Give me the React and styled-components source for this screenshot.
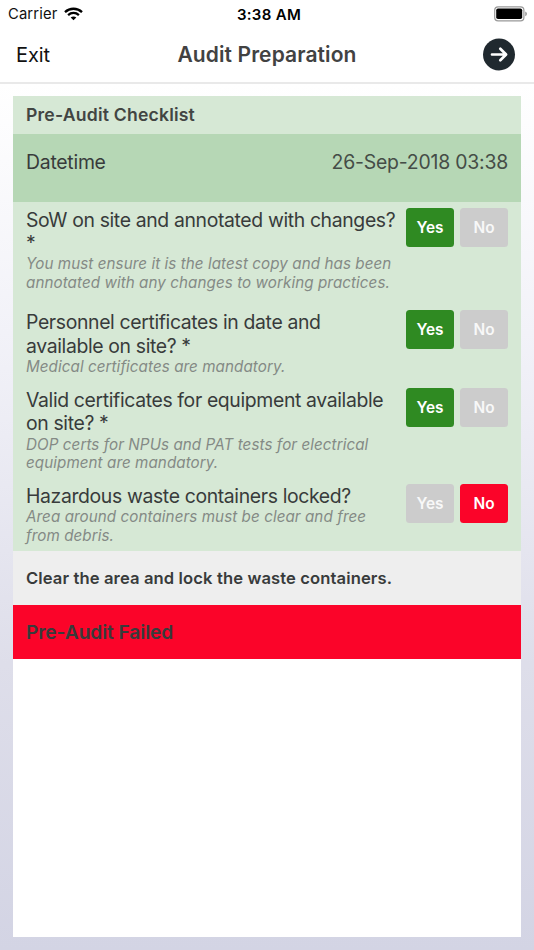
import React from "react";
import styled, { createGlobalStyle } from "styled-components";

const GlobalStyle = createGlobalStyle`
    * {
        box-sizing: border-box;
    }

    body {
        margin: 0;
        font-family: Inter, "Liberation Sans", sans-serif;
        color: #383b3b;
    }
`;

const Screen = styled.div`
    width: 100%;
    height: 100vh;
    display: flex;
    flex-direction: column;
    overflow: hidden;
`;

const StatusBar = styled.div`
    height: 27px;
    flex: none;
    display: grid;
    grid-template-columns: 1fr auto 1fr;
    align-items: center;
    padding: 0 6px 0 8px;
    color: #111;
    background: #fff;
`;

const Carrier = styled.div`
    display: flex;
    align-items: center;
    gap: 7px;
    font-size: 14.8px;
    letter-spacing: 0.12px;
    line-height: 27px;

    span {
        padding-top: 1px;
    }
`;

const Clock = styled.div`
    font-size: 15px;
    font-weight: 600;
    letter-spacing: 0.3px;
    color: #000;
    margin-right: -2px;
`;

const Battery = styled.svg`
    justify-self: end;
`;

const NavBar = styled.header`
    height: 57px;
    flex: none;
    display: grid;
    grid-template-columns: 1fr auto 1fr;
    align-items: center;
    padding: 0 18px 1px 16px;
    background: #fff;
    border-bottom: 2px solid #e9e9e9;
`;

const ExitButton = styled.button`
    justify-self: start;
    padding: 2px 0 0;
    border: none;
    background: none;
    font: inherit;
    font-size: 20px;
    letter-spacing: -0.1px;
    color: #111;
`;

const NavTitle = styled.h1`
    margin: 0 -2px 0 0;
    font-size: 21px;
    font-weight: 600;
    letter-spacing: 0.1px;
    color: #424242;
`;

const NextButton = styled.button`
    justify-self: end;
    display: flex;
    padding: 0;
    border: none;
    background: none;
`;

const Content = styled.main`
    flex: 1;
    display: flex;
    padding: 12px 13px 13px;
    background: linear-gradient(#fff, #f0f0f7 33%, #dedeea 67%, #d3d4e4);
`;

const Card = styled.section`
    flex: 1;
    background: #fff;
`;

const CardHeader = styled.h2`
    margin: 0;
    height: 38.4px;
    padding: 0 13px;
    font-size: 17.6px;
    font-weight: 600;
    line-height: 38.4px;
    letter-spacing: 0.2px;
    color: #424543;
    background: #d6e8d5;
`;

const DateRow = styled.div`
    display: flex;
    justify-content: space-between;
    height: 67.2px;
    padding: 16.6px 13px 0;
    font-size: 19.4px;
    line-height: 23.3px;
    letter-spacing: -0.25px;
    background: #b6d7b5;
`;

const DateValue = styled.span`
    letter-spacing: -0.2px;
    color: #454d47;
`;

const Questions = styled.div`
    background: #d6e8d5;
`;

const Question = styled.div`
    display: flex;
    justify-content: space-between;
    padding: 6.4px 13px ${(props) => (props.$spaced ? "12px" : "5.6px")};
`;

const QuestionText = styled.div`
    width: 374px;
    padding-top: 0.8px;
    white-space: pre-line;
`;

const Label = styled.div`
    font-size: 19.4px;
    line-height: 23.3px;
    letter-spacing: -0.36px;
`;

const Hint = styled.div`
    font-size: 15.2px;
    font-style: italic;
    line-height: 18.35px;
    letter-spacing: 0.07px;
    color: #848a85;
`;

const Answers = styled.div`
    display: flex;
    gap: 6px;
`;

const answerColors = {
    yes: "#2f8a22",
    no: "#fb0429",
    off: "#cccccc",
};

const Answer = styled.button`
    width: 48px;
    height: 39px;
    padding: 0;
    border: none;
    border-radius: 3.5px;
    font: inherit;
    font-size: 15.4px;
    font-weight: 600;
    color: ${(props) => (props.$tone === "off" ? "#f8f8f8" : "#fff")};
    background: ${(props) => answerColors[props.$tone]};
`;

const Note = styled.div`
    height: 54.2px;
    padding: 0 13px;
    font-size: 16.6px;
    font-weight: 600;
    line-height: 54.2px;
    letter-spacing: 0.11px;
    background: #eeeeee;
`;

const Result = styled.div`
    height: 54.2px;
    padding: 0 13px;
    font-size: 19.2px;
    font-weight: 600;
    line-height: 54.2px;
    letter-spacing: -0.1px;
    background: #fb0429;
`;

const questions = [
    {
        label: "SoW on site and annotated with changes?\n*",
        hint: "You must ensure it is the latest copy and has been\nannotated with any changes to working practices.",
        answer: "yes",
        spaced: true,
    },
    {
        label: "Personnel certificates in date and\navailable on site? *",
        hint: "Medical certificates are mandatory.",
        answer: "yes",
    },
    {
        label: "Valid certificates for equipment available\non site? *",
        hint: "DOP certs for NPUs and PAT tests for electrical\nequipment are mandatory.",
        answer: "yes",
    },
    {
        label: "Hazardous waste containers locked?",
        hint: "Area around containers must be clear and free\nfrom debris.",
        answer: "no",
    },
];

function WifiIcon() {
    return (
        <svg width="19" height="14" viewBox="0 0 19 14" fill="none" stroke="#000" strokeWidth="2.3">
            <path d="M1 5.1C5.8.6 13.2.6 18 5.1" />
            <path d="M4.1 8.1c3.1-2.9 7.7-2.9 10.8 0" />
            <path d="M9.5 13.3 6.7 10.5c1.6-1.5 4-1.5 5.6 0z" fill="#000" stroke="none" />
        </svg>
    );
}

function ArrowIcon() {
    return (
        <svg width="33" height="33" viewBox="0 0 33 33" fill="none">
            <circle cx="16" cy="16.5" r="16" fill="#20292f" />
            <path
                d="M9 16.5h14M17.3 10.7l5.8 5.8-5.8 5.8"
                stroke="#fff"
                strokeWidth="2.7"
                strokeLinecap="round"
                strokeLinejoin="round"
            />
        </svg>
    );
}

export default function App() {
    return (
        <Screen>
            <GlobalStyle />
            <StatusBar>
                <Carrier>
                    <span>Carrier</span>
                    <WifiIcon />
                </Carrier>
                <Clock>3:38 AM</Clock>
                <Battery width="34" height="16" viewBox="0 0 34 16">
                    <rect x="0.7" y="0.9" width="29.2" height="14" rx="3.4" fill="#fff" stroke="#999" strokeWidth="1.2" />
                    <rect x="2.2" y="2.5" width="26" height="10.6" rx="1.8" fill="#000" />
                    <path d="M31.3 5.6c2 .8 2 3.8 0 4.6z" fill="#888" />
                </Battery>
            </StatusBar>
            <NavBar>
                <ExitButton>Exit</ExitButton>
                <NavTitle>Audit Preparation</NavTitle>
                <NextButton aria-label="Next">
                    <ArrowIcon />
                </NextButton>
            </NavBar>
            <Content>
                <Card>
                    <CardHeader>Pre-Audit Checklist</CardHeader>
                    <DateRow>
                        <span>Datetime</span>
                        <DateValue>26-Sep-2018 03:38</DateValue>
                    </DateRow>
                    <Questions>
                        {questions.map((q) => (
                            <Question key={q.label} $spaced={q.spaced}>
                                <QuestionText>
                                    <Label>{q.label}</Label>
                                    <Hint>{q.hint}</Hint>
                                </QuestionText>
                                <Answers>
                                    <Answer $tone={q.answer === "yes" ? "yes" : "off"}>Yes</Answer>
                                    <Answer $tone={q.answer === "no" ? "no" : "off"}>No</Answer>
                                </Answers>
                            </Question>
                        ))}
                    </Questions>
                    <Note>Clear the area and lock the waste containers.</Note>
                    <Result>Pre-Audit Failed</Result>
                </Card>
            </Content>
        </Screen>
    );
}
